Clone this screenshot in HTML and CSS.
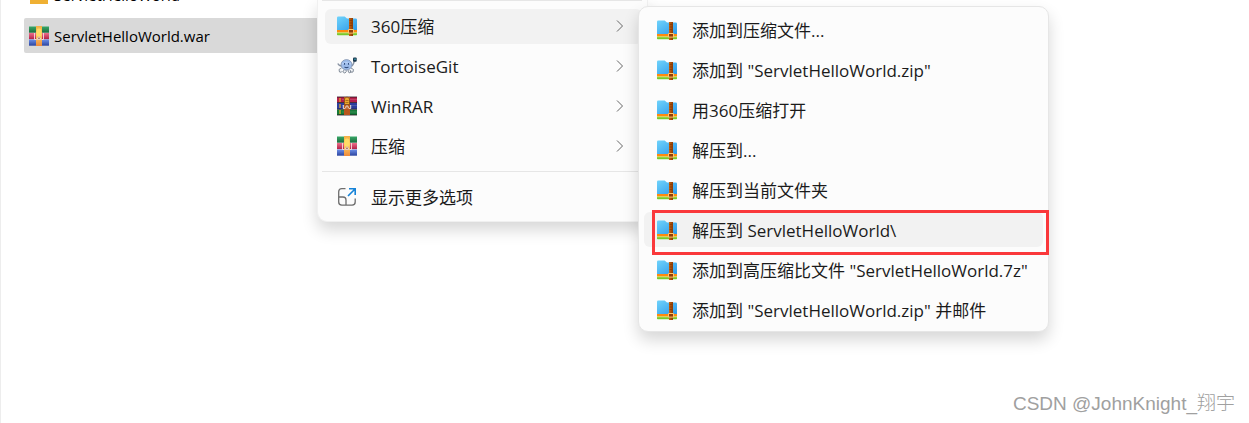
FILE: index.html
```html
<!DOCTYPE html>
<html lang="zh-CN">
<head>
<meta charset="utf-8">
<title>ServletHelloWorld.war</title>
<link rel="stylesheet" href="styles.css">
</head>
<body>
<svg class="defs" aria-hidden="true">
  <defs>
    <linearGradient id="blue" x1="0" y1="0" x2="1" y2="1"><stop offset="0" stop-color="#6fd3fb"/><stop offset="1" stop-color="#2e9aea"/></linearGradient>
    <linearGradient id="strap" x1="0" x2="1"><stop offset="0" stop-color="#c8630f"/><stop offset=".5" stop-color="#a94f0b"/><stop offset="1" stop-color="#8a3c06"/></linearGradient>
    <linearGradient id="green" x1="0" y1="0" x2="0" y2="1"><stop offset="0" stop-color="#37a868"/><stop offset="1" stop-color="#1d6b3c"/></linearGradient>
    <linearGradient id="red" x1="0" y1="0" x2="0" y2="1"><stop offset="0" stop-color="#ee6f8b"/><stop offset="1" stop-color="#b32046"/></linearGradient>
    <linearGradient id="navy" x1="0" y1="0" x2="0" y2="1"><stop offset="0" stop-color="#6c8fe8"/><stop offset="1" stop-color="#2c449f"/></linearGradient>
    <linearGradient id="gold" x1="0" y1="0" x2="0" y2="1"><stop offset="0" stop-color="#f5ad45"/><stop offset=".4" stop-color="#ffd766"/><stop offset="1" stop-color="#ee8a3c"/></linearGradient>
    <symbol id="folder" viewBox="0 0 20 20">
      <path d="M0 15h20v3.500q0 .7-.7.700H.7Q0 19.200 0 18.500z" fill="#78c92c"/>
      <path d="M0 13.500h20v3H0z" fill="#ff8a0c"/>
      <path d="M0 16.500h20v.7H0z" fill="#fff1a0"/>
      <path d="M0 1.800Q0 .5 1.300.5h6.400L10 2.500h8.700Q20 2.500 20 3.800V14H0z" fill="url(#blue)"/>
      <path d="M12 2h4v18h-4z" fill="url(#strap)"/>
      <path d="M12.600 4.500h2.500M12.600 7h2.500M12.600 9.500h2.500" stroke="#7a3507" stroke-width=".7"/>
      <path d="M11.500 13.500h5v3.600h-5z" fill="#8c3d08" stroke="#ffc56c" stroke-width="1"/>
    </symbol>
    <symbol id="archive" viewBox="0 0 20 20">
      <rect y=".5" width="20" height="6.200" fill="url(#green)"/>
      <rect x="0" y="7" width="20" height="6.200" fill="url(#red)"/>
      <rect y="13.500" width="20" height="6.200" fill="url(#navy)"/>
      <path d="M7 0h6v20H7z" fill="url(#gold)"/>
      <path d="M5.500 7v6.500h2M14.500 7v6.500h-2" fill="none" stroke="#f7dfdc" stroke-width=".9"/>
      <path d="M8 3.500q2-2 4 0V10H8z" fill="#ffdb65"/>
      <path d="M8.500 13.500V12q1.500-2.500 3 0v1.500z" fill="#b98368" stroke="#ece1dc" stroke-width=".8"/>
    </symbol>
    <symbol id="winrar" viewBox="0 0 20 20">
      <rect y="1" width="20" height="5.500" fill="#b51f49"/>
      <rect y="7" width="20" height="6" fill="#2c3d9c"/>
      <rect y="13.500" width="20" height="5.500" fill="#157a38"/>
      <path d="M0 1h20M0 6.500h20M0 13.200h20M0 19h20" stroke="#271320" stroke-width=".8"/>
      <path d="M5 3.500h15M5 9.500h15M5 16h15" stroke="#fff" stroke-opacity=".15"/>
      <path d="M3 2v4M3 8v4M3 14v4" stroke="#f0b323" stroke-width="1.200"/>
      <path d="M7 1h6v18H7z" fill="#b8561c"/>
      <path d="M7.500 2.500Q10-.5 12.500 2.500v6h-5z" fill="#edaa2d" stroke="#744018" stroke-width=".7"/>
      <path d="M8.500 4.500h3M8.500 6.500h3" stroke="#9c6016" stroke-width=".8"/>
      <path d="M6.300 9v3.500h1.500M13.700 9v3.500h-1.500M8.800 12.500v-2q1.200-1.500 2.400 0v2" fill="none" stroke="#f1e8dc"/>
    </symbol>
    <symbol id="tortoise" viewBox="0 0 20 20">
      <path d="M5 10Q2 10 .8 7.500M14.500 10q2-1 2.800-5" fill="none" stroke="#8993a3" stroke-width="1.300"/>
      <path d="M4.500 12q-4 1-2 4 2 1 3-1M14 12q4 1 2 4-2 1-3-1M7 14q-2 3 1 3 2-1 1-3M11 14q0 3 2 3 2-1 0-3" fill="#f1f4f7" stroke="#7b8492" stroke-width=".9"/>
      <ellipse cx="9.500" cy="8.800" rx="5.500" ry="5.200" fill="#9dbceb" stroke="#8090ab" stroke-width=".8"/>
      <path d="M5 8q4-3 9 0" fill="none" stroke="#c6dafb" stroke-width=".8"/>
      <path d="M7.500 7v1.700M11.500 7v1.700M7.500 11q2 1.200 4 0" stroke="#334f80" stroke-width="1.100" fill="none"/>
      <rect x="16" y="1.500" width="3.700" height="4.300" rx="1" fill="#18364b"/>
      <path d="M18 2.500V4" stroke="#4bc8db"/>
    </symbol>
    <symbol id="more" viewBox="0 0 20 20">
      <path d="M8.500 1.700H4.800Q1.700 1.700 1.700 4.800v10.300q0 3.100 3.100 3.100h10.300q3.100 0 3.100-3.100V11.500M1.700 10H6q3 0 3 3v5" fill="none" stroke="#6e6e6e" stroke-width="1.300"/>
      <path d="M12 1.800h6.200V8M18 2l-7 7" fill="none" stroke="#1683d8" stroke-width="1.600"/>
    </symbol>
    <symbol id="chevron" viewBox="0 0 8 14"><path d="M1 1.500 6.500 7 1 12.500" fill="none" stroke="#666"/></symbol>
  </defs>
</svg>

<main class="explorer">
  <ul class="files">
    <li class="file"><svg class="icon" viewBox="0 0 20 20"><path d="M1 3h7l2 2h9v14H1z" fill="#efb033"/></svg>ServletHelloWorld</li>
    <li class="file file-selected"><svg class="icon"><use href="#archive"/></svg>ServletHelloWorld.war</li>
  </ul>
  <footer class="watermark">CSDN @JohnKnight_翔宇</footer>
</main>

<div class="menu menu-main" role="menu">
  <hr class="separator">
  <button class="item item-active" role="menuitem"><svg class="icon"><use href="#folder"/></svg><span class="label">360压缩</span><svg class="chevron"><use href="#chevron"/></svg></button>
  <button class="item" role="menuitem"><svg class="icon"><use href="#tortoise"/></svg><span class="label">TortoiseGit</span><svg class="chevron"><use href="#chevron"/></svg></button>
  <button class="item" role="menuitem"><svg class="icon"><use href="#winrar"/></svg><span class="label">WinRAR</span><svg class="chevron"><use href="#chevron"/></svg></button>
  <button class="item" role="menuitem"><svg class="icon"><use href="#archive"/></svg><span class="label">压缩</span><svg class="chevron"><use href="#chevron"/></svg></button>
  <hr class="separator">
  <button class="item" role="menuitem"><svg class="icon"><use href="#more"/></svg><span class="label">显示更多选项</span></button>
</div>

<div class="menu menu-sub" role="menu">
  <button class="item" role="menuitem"><svg class="icon"><use href="#folder"/></svg><span class="label">添加到压缩文件...</span></button>
  <button class="item" role="menuitem"><svg class="icon"><use href="#folder"/></svg><span class="label">添加到 "ServletHelloWorld.zip"</span></button>
  <button class="item" role="menuitem"><svg class="icon"><use href="#folder"/></svg><span class="label">用360压缩打开</span></button>
  <button class="item" role="menuitem"><svg class="icon"><use href="#folder"/></svg><span class="label">解压到...</span></button>
  <button class="item" role="menuitem"><svg class="icon"><use href="#folder"/></svg><span class="label">解压到当前文件夹</span></button>
  <button class="item item-active" role="menuitem"><svg class="icon"><use href="#folder"/></svg><span class="label">解压到 ServletHelloWorld\</span></button>
  <button class="item" role="menuitem"><svg class="icon"><use href="#folder"/></svg><span class="label">添加到高压缩比文件 "ServletHelloWorld.7z"</span></button>
  <button class="item" role="menuitem"><svg class="icon"><use href="#folder"/></svg><span class="label">添加到 "ServletHelloWorld.zip" 并邮件</span></button>
</div>
<div class="marker"></div>
</body>
</html>
```
FILE: styles.css
```css
* { box-sizing: border-box; }
body {
  margin: 0;
  overflow: hidden;
  background: #fff;
  color: #1b1b1b;
  font-family: "Open Sans", "Noto Sans CJK SC", sans-serif;
}
.defs { position: absolute; width: 0; height: 0; }
.explorer {
  display: flex;
  flex-direction: column;
  justify-content: space-between;
  height: 100vh;
  overflow: hidden;
  border-left: 1px solid #ededed;
}
.files {
  display: flex;
  flex-direction: column;
  gap: 6px;
  width: 320px;
  margin: -23px 0 0 23px;
  padding: 0;
  list-style: none;
}
.file {
  display: flex;
  align-items: center;
  gap: 5px;
  height: 35px;
  padding-left: 5px;
  border-radius: 2px;
  color: #000;
  font-size: 15px;
}
.file-selected { background: #d9d9d9; }
.icon { flex: none; width: 20px; height: 20px; }
.watermark {
  align-self: flex-end;
  padding: 0 14px 6px 0;
  color: #a0a0a0;
  font-family: "Liberation Sans", "Noto Sans CJK SC", sans-serif;
  font-size: 19px;
  font-weight: 300;
  line-height: 26px;
}
.menu {
  position: absolute;
  display: flex;
  flex-direction: column;
  gap: 5px;
  border: 1px solid #e6e6e6;
  border-radius: 10px;
  background: #fcfcfc;
  box-shadow: 0 8px 16px rgba(0, 0, 0, .16);
}
.menu-main {
  top: 0;
  left: 317px;
  width: 331px;
  padding: 0 5px 6px 7px;
  border-top: 0;
  border-radius: 0 0 10px 10px;
  border-color: #f0f0f0;
}
.menu-sub {
  top: 6px;
  left: 638px;
  width: 411px;
  padding: 5px 5px 4px;
}
.separator {
  align-self: stretch;
  height: 1px;
  margin: 2px 0 3px -3px;
  border: 0;
  background: #e6e6e6;
}
.separator:first-child { margin: 0 0 3px -3px; }
.item {
  display: flex;
  align-items: center;
  height: 35px;
  padding: 0 18px 1px 12px;
  border: 0;
  border-radius: 6px;
  background: transparent;
  color: inherit;
  font: inherit;
  font-size: 17px;
  line-height: 24px;
  text-align: left;
  white-space: nowrap;
}
.item-active { background: #f2f2f2; }
.label { flex: 1; margin-left: 14px; padding-top: 2px; }
.chevron { width: 8px; height: 14px; }
.menu-sub .label { margin-left: 15px; }
.menu-sub .item { padding: 0 12px 0 13px; }
.marker {
  position: absolute;
  top: 210px;
  left: 652px;
  width: 397px;
  height: 45px;
  border: 3px solid #fa383b;
}
```
